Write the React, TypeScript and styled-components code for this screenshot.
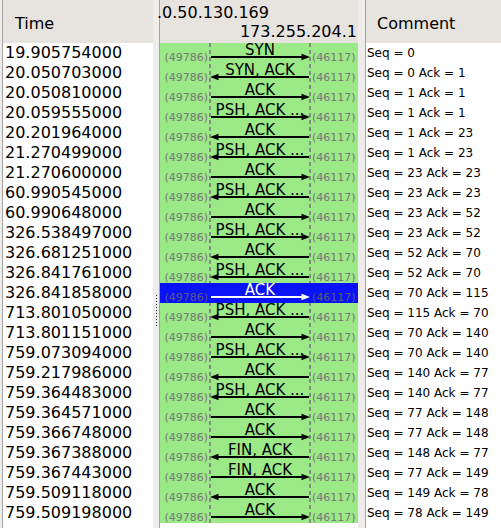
import React from "react";
import styled, { createGlobalStyle } from "styled-components";

const Global = createGlobalStyle`
  html, body { margin: 0; padding: 0; background: #efedeb; }
  body { font-family: "DejaVu Sans", "Liberation Sans", sans-serif; }
`;

type Dir = "r" | "l";
interface Packet {
  time: string;
  label: string;
  dir: Dir;
  comment: string;
}

const PSH = "PSH, ACK ...";

const packets: Packet[] = [
  { time: "19.905754000", label: "SYN", dir: "r", comment: "Seq = 0" },
  { time: "20.050703000", label: "SYN, ACK", dir: "l", comment: "Seq = 0 Ack = 1" },
  { time: "20.050810000", label: "ACK", dir: "r", comment: "Seq = 1 Ack = 1" },
  { time: "20.059555000", label: PSH, dir: "r", comment: "Seq = 1 Ack = 1" },
  { time: "20.201964000", label: "ACK", dir: "l", comment: "Seq = 1 Ack = 23" },
  { time: "21.270499000", label: PSH, dir: "l", comment: "Seq = 1 Ack = 23" },
  { time: "21.270600000", label: "ACK", dir: "r", comment: "Seq = 23 Ack = 23" },
  { time: "60.990545000", label: PSH, dir: "l", comment: "Seq = 23 Ack = 23" },
  { time: "60.990648000", label: "ACK", dir: "r", comment: "Seq = 23 Ack = 52" },
  { time: "326.538497000", label: PSH, dir: "r", comment: "Seq = 23 Ack = 52" },
  { time: "326.681251000", label: "ACK", dir: "l", comment: "Seq = 52 Ack = 70" },
  { time: "326.841761000", label: PSH, dir: "l", comment: "Seq = 52 Ack = 70" },
  { time: "326.841858000", label: "ACK", dir: "r", comment: "Seq = 70 Ack = 115" },
  { time: "713.801050000", label: PSH, dir: "l", comment: "Seq = 115 Ack = 70" },
  { time: "713.801151000", label: "ACK", dir: "r", comment: "Seq = 70 Ack = 140" },
  { time: "759.073094000", label: PSH, dir: "r", comment: "Seq = 70 Ack = 140" },
  { time: "759.217986000", label: "ACK", dir: "l", comment: "Seq = 140 Ack = 77" },
  { time: "759.364483000", label: PSH, dir: "l", comment: "Seq = 140 Ack = 77" },
  { time: "759.364571000", label: "ACK", dir: "r", comment: "Seq = 77 Ack = 148" },
  { time: "759.366748000", label: "ACK", dir: "r", comment: "Seq = 77 Ack = 148" },
  { time: "759.367388000", label: "FIN, ACK", dir: "l", comment: "Seq = 148 Ack = 77" },
  { time: "759.367443000", label: "FIN, ACK", dir: "r", comment: "Seq = 77 Ack = 149" },
  { time: "759.509118000", label: "ACK", dir: "l", comment: "Seq = 149 Ack = 78" },
  { time: "759.509198000", label: "ACK", dir: "r", comment: "Seq = 78 Ack = 149" },
];

const SELECTED = 12;

const Window = styled.div`
  display: flex;
  width: 501px;
  height: 528px;
  padding-left: 2px;
  box-sizing: border-box;
  overflow: hidden;
  background: #efedeb;
`;

const Panel = styled.div<{ $w: number }>`
  display: flex;
  flex-direction: column;
  flex: none;
  width: ${(p) => p.$w}px;
  height: 100%;
  box-sizing: border-box;
  border-left: 1px solid #a4a3a1;
`;

const Header = styled.div<{ $pad: number }>`
  display: flex;
  align-items: center;
  flex: none;
  height: 43px;
  box-sizing: border-box;
  padding: 3px 0 0 ${(p) => p.$pad}px;
  background: #e7e3de;
  color: #000;
  font-size: 16px;
`;

const FlowHeader = styled.div`
  flex: none;
  height: 43px;
  box-sizing: border-box;
  padding-top: 4px;
  background: #e7e3de;
  color: #000;
  font-size: 16px;
  line-height: 18.5px;
  white-space: nowrap;
`;

const HostLeft = styled.div`
  margin-left: -3px;
`;

const HostRight = styled.div`
  text-align: right;
  padding-right: 1px;
  overflow: hidden;
`;

const ListBody = styled.div<{ $pad: number; $size: number }>`
  flex: 1;
  background: #fff;
  padding-left: ${(p) => p.$pad}px;
  font-size: ${(p) => p.$size}px;
  line-height: 20px;
  color: #000;
  white-space: nowrap;
  overflow: hidden;
`;

const ListRow = styled.div`
  height: 20px;
`;

const Splitter = styled.div<{ $w: number }>`
  flex: none;
  width: ${(p) => p.$w}px;
  box-sizing: border-box;
  padding: 295px 0 0 3px;
`;

const Grip = styled.div`
  width: 1px;
  height: 31px;
  background: repeating-linear-gradient(to bottom, #2a2a2a 0 1px, transparent 1px 3px);
`;

const FlowColumn = styled.div`
  display: flex;
  flex-direction: column;
  flex: 1;
  background: #fff;
`;

const FlowBody = styled.div`
  flex: none;
  background:
    repeating-linear-gradient(to bottom, #858a84 0 4px, transparent 4px 7px) 49px 0 / 2px 100% no-repeat,
    repeating-linear-gradient(to bottom, #858a84 0 4px, transparent 4px 7px) 149px 0 / 2px 100% no-repeat,
    #9be987;
`;

const FlowRow = styled.div<{ $sel: boolean }>`
  display: grid;
  grid-template-columns: 50px 100px 48px;
  grid-template-rows: 20px;
  height: 20px;
  background: ${(p) => (p.$sel ? "#0a12f6" : "transparent")};
  color: ${(p) => (p.$sel ? "#fff" : "#000")};
`;

const Port = styled.div<{ $side: "l" | "r"; $sel: boolean }>`
  font-size: 11px;
  line-height: 12px;
  padding-top: 9px;
  color: ${(p) => (p.$sel ? "#5a5a7a" : "#777")};
  white-space: nowrap;
  text-align: ${(p) => (p.$side === "l" ? "right" : "left")};
  padding-right: ${(p) => (p.$side === "l" ? "2px" : "0")};
  padding-left: ${(p) => (p.$side === "r" ? "2px" : "0")};
`;

const ArrowCell = styled.div`
  display: grid;
  grid-template: 20px / 100px;
`;

const ArrowSvg = styled.svg`
  grid-area: 1 / 1;
  display: block;
`;

const ArrowLabel = styled.div`
  grid-area: 1 / 1;
  justify-self: center;
  align-self: start;
  font-size: 15px;
  line-height: 14px;
  white-space: nowrap;
  position: relative;
`;

const Arrow: React.FC<{ dir: Dir; color: string }> = ({ dir, color }) => (
  <ArrowSvg width={100} height={20} viewBox="0 0 100 20">
    {dir === "r" ? (
      <>
        <line x1={1} y1={14} x2={93} y2={14} stroke={color} strokeWidth={1.8} />
        <polygon points="100,14 91.5,10.8 91.5,17.2" fill={color} />
      </>
    ) : (
      <>
        <line x1={7} y1={14} x2={99} y2={14} stroke={color} strokeWidth={1.8} />
        <polygon points="0,14 8.5,10.8 8.5,17.2" fill={color} />
      </>
    )}
  </ArrowSvg>
);

const FlowFill = styled.div`
  flex: 1;
  background: #fff;
`;

export default function App() {
  return (
    <>
      <Global />
      <Window>
        <Panel $w={151}>
          <Header $pad={12}>Time</Header>
          <ListBody $pad={2} $size={16}>
            {packets.map((p, i) => (
              <ListRow key={i}>{p.time}</ListRow>
            ))}
          </ListBody>
        </Panel>
        <Splitter $w={6}>
          <Grip />
        </Splitter>
        <Panel $w={199}>
          <FlowHeader>
            <HostLeft>.0.50.130.169</HostLeft>
            <HostRight>173.255.204.1</HostRight>
          </FlowHeader>
          <FlowColumn>
            <FlowBody>
              {packets.map((p, i) => {
                const sel = i === SELECTED;
                return (
                  <FlowRow key={i} $sel={sel}>
                    <Port $side="l" $sel={sel}>(49786)</Port>
                    <ArrowCell>
                      <Arrow dir={p.dir} color={sel ? "#fff" : "#000"} />
                      <ArrowLabel>{p.label}</ArrowLabel>
                    </ArrowCell>
                    <Port $side="r" $sel={sel}>(46117)</Port>
                  </FlowRow>
                );
              })}
            </FlowBody>
            <FlowFill />
          </FlowColumn>
        </Panel>
        <Splitter $w={7} />
        <Panel $w={136}>
          <Header $pad={11}>Comment</Header>
          <ListBody $pad={1} $size={12}>
            {packets.map((p, i) => (
              <ListRow key={i}>{p.comment}</ListRow>
            ))}
          </ListBody>
        </Panel>
      </Window>
    </>
  );
}
